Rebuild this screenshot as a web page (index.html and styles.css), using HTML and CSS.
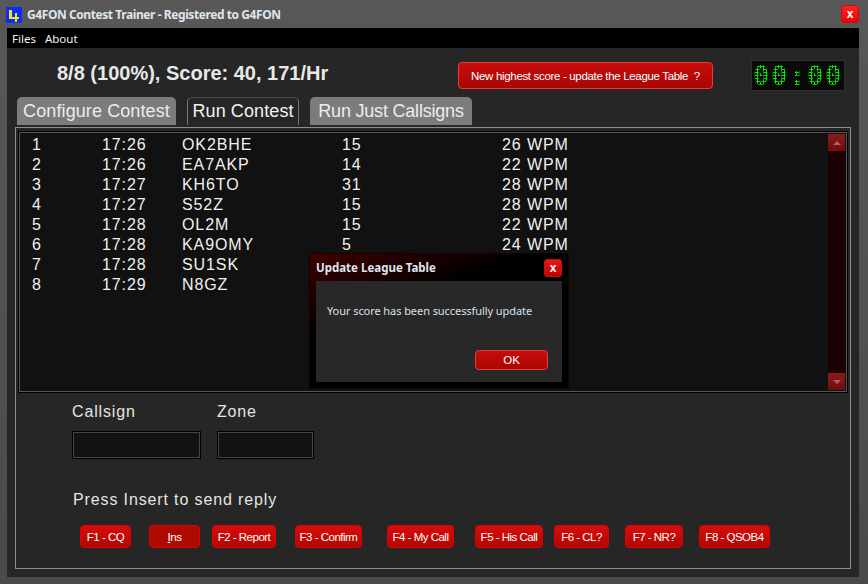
FILE: index.html
```html
<!DOCTYPE html>
<html lang="en">
  <head>
    <meta charset="utf-8" />
    <title>G4FON Contest Trainer</title>
    <link rel="stylesheet" href="styles.css">
  </head>
  <body>
    <div class="window">
      <div class="titlebar">
        <svg class="app-icon" width="16" height="16" viewBox="0 0 16 16">
          <rect width="16" height="16" fill="#0a2cff" />
          <path d="M3 3h3v7h3V6h2v4h2v2h-2v3H9v-3H3z" fill="#f5e614" />
        </svg>
        <span class="title-text">G4FON Contest Trainer - Registered to G4FON</span>
        <button class="close-btn" type="button">x</button>
      </div>

      <div class="client">
        <div class="menubar">
          <span>Files</span>
          <span>About</span>
        </div>

        <div class="content">
          <div class="score-row">
            <div class="score">8/8 (100%), Score: 40, 171/Hr</div>
            <button class="red-btn league-btn" type="button">New highest score - update the League Table&nbsp; ?</button>
            <div class="timer"><span class="timer-digits">00:00</span></div>
          </div>

          <div class="tabs">
            <div class="tab tab-configure">Configure Contest</div>
            <div class="tab tab-active">Run Contest</div>
            <div class="tab tab-calls">Run Just Callsigns</div>
          </div>

          <div class="panel">
            <div class="log">
              <div class="log-rows">
                <div class="log-row"><span>1</span><span>17:26</span><span>OK2BHE</span><span>15</span><span>26 WPM</span></div>
                <div class="log-row"><span>2</span><span>17:26</span><span>EA7AKP</span><span>14</span><span>22 WPM</span></div>
                <div class="log-row"><span>3</span><span>17:27</span><span>KH6TO</span><span>31</span><span>28 WPM</span></div>
                <div class="log-row"><span>4</span><span>17:27</span><span>S52Z</span><span>15</span><span>28 WPM</span></div>
                <div class="log-row"><span>5</span><span>17:28</span><span>OL2M</span><span>15</span><span>22 WPM</span></div>
                <div class="log-row"><span>6</span><span>17:28</span><span>KA9OMY</span><span>5</span><span>24 WPM</span></div>
                <div class="log-row"><span>7</span><span>17:28</span><span>SU1SK</span><span></span><span></span></div>
                <div class="log-row"><span>8</span><span>17:29</span><span>N8GZ</span><span></span><span></span></div>
              </div>
              <div class="scrollbar">
                <div class="scroll-btn"><span class="arrow-up"></span></div>
                <div class="scroll-btn"><span class="arrow-down"></span></div>
              </div>
            </div>

            <div class="entry">
              <div class="field field-call">
                <label for="callsign">Callsign</label>
                <input id="callsign" type="text" />
              </div>
              <div class="field field-zone">
                <label for="zone">Zone</label>
                <input id="zone" type="text" />
              </div>
            </div>

            <div class="hint">Press Insert to send reply</div>

            <div class="fkeys">
              <button class="red-btn fkey k1" type="button">F1 - CQ</button>
              <button class="red-btn fkey k2" type="button"><u>I</u>ns</button>
              <button class="red-btn fkey k3" type="button">F2 - Report</button>
              <button class="red-btn fkey k4" type="button">F3 - Confirm</button>
              <button class="red-btn fkey k5" type="button">F4 - My Call</button>
              <button class="red-btn fkey k6" type="button">F5 - His Call</button>
              <button class="red-btn fkey k7" type="button">F6 - CL?</button>
              <button class="red-btn fkey k8" type="button">F7 - NR?</button>
              <button class="red-btn fkey k9" type="button">F8 - QSOB4</button>
            </div>
          </div>
        </div>
      </div>

      <div class="dialog">
        <div class="dialog-title">
          <span>Update League Table</span>
          <button class="close-btn close-small" type="button">x</button>
        </div>
        <div class="dialog-body">
          <p>Your score has been successfully update</p>
          <button class="red-btn ok-btn" type="button">OK</button>
        </div>
      </div>
    </div>
  </body>
</html>
```

FILE: styles.css
```css
* {
  box-sizing: border-box;
}
html,
body {
  margin: 0;
  height: 100%;
  background: #4e4e4e;
}
body {
  font-family: "Liberation Sans", Arial, sans-serif;
  color: #e6e6e6;
  overflow: hidden;
}
button {
  font-family: inherit;
  margin: 0;
  padding: 0;
  cursor: pointer;
}

.window {
  position: relative;
  width: 868px;
  height: 584px;
  padding: 0 9px 7px 7px;
  background: linear-gradient(#585858, #4a4a4a);
  display: flex;
  flex-direction: column;
}

.titlebar {
  height: 28px;
  display: flex;
  align-items: center;
  flex-shrink: 0;
}
.app-icon {
  margin: 2px 0 0 -1px;
}
.title-text {
  margin-left: 5px;
  font: bold 12px "Noto Sans", sans-serif;
  letter-spacing: -0.42px;
  color: #dfe6ee;
}
.close-btn {
  margin: 0 0 0 auto;
  width: 18px;
  height: 18px;
  border: 1px solid #c01010;
  border-radius: 3px;
  background: linear-gradient(#ff2424, #f00000);
  color: #fff;
  font: bold 12px/14px "Liberation Sans", sans-serif;
}

.client {
  flex: 1;
  display: flex;
  flex-direction: column;
  background: #262626;
}
.menubar {
  height: 20px;
  background: #000;
  display: flex;
  gap: 9px;
  padding-left: 5px;
  align-items: center;
  font: 11.5px "Noto Sans", sans-serif;
  color: #f0f0f0;
  flex-shrink: 0;
}
.content {
  flex: 1;
  display: flex;
  flex-direction: column;
  padding: 0 8px 8px;
}

.score-row {
  height: 49px;
  display: flex;
  align-items: flex-start;
  flex-shrink: 0;
}
.score {
  margin: 14px 0 0 42px;
  width: 401px;
  font-size: 20px;
  font-weight: bold;
  line-height: 22px;
  color: #e8e8e8;
  white-space: nowrap;
}
.red-btn {
  border: 1px solid #e83c3c;
  border-radius: 4px;
  background: linear-gradient(#c80c0c, #a80800);
  color: #fff;
  font-size: 11.5px;
  white-space: nowrap;
}
.league-btn {
  margin-top: 14px;
  width: 255px;
  height: 27px;
  letter-spacing: -0.33px;
  flex-shrink: 0;
}
.timer {
  margin: 12px 0 0 38px;
  width: 94px;
  height: 31px;
  background: #0a0a0a;
  border: 1px solid #303030;
  display: flex;
  align-items: center;
  justify-content: center;
  flex-shrink: 0;
}
.timer-digits {
  font: bold 27px/27px "DejaVu Sans Mono", monospace;
  letter-spacing: 1.7px;
  color: #00e800;
  -webkit-mask-image: radial-gradient(circle at 1.5px 1.5px, #000 1.2px, transparent 1.4px);
  -webkit-mask-size: 3px 3px;
  mask-image: radial-gradient(circle at 1.5px 1.5px, #000 1.2px, transparent 1.4px);
  mask-size: 3px 3px;
}

.tabs {
  height: 30px;
  display: flex;
  align-items: flex-start;
  padding-left: 2px;
  flex-shrink: 0;
}
.tab {
  height: 28px;
  display: flex;
  align-items: center;
  justify-content: center;
  font-size: 18px;
  letter-spacing: 0.1px;
  border-radius: 5px 5px 0 0;
  background: #7c7c7c;
  color: #ececec;
}
.tab-configure {
  width: 159px;
}
.tab-active {
  margin-left: 11px;
  width: 112px;
  background: #262626;
  border: 1px solid #777;
  border-top-color: #484848;
  border-bottom: 0;
  color: #f2f2f2;
}
.tab-calls {
  margin-left: 11px;
  width: 162px;
  letter-spacing: -0.2px;
}

.panel {
  flex: 1;
  border: 1px solid #8c8c8c;
  padding: 4px 3px 0;
  display: flex;
  flex-direction: column;
}
.log {
  height: 260px;
  display: flex;
  background: #111;
  border: 1px solid #555;
  outline: 1px solid #000;
  flex-shrink: 0;
}
.log-rows {
  flex: 1;
  padding: 2px 0 0 12px;
}
.log-row {
  display: grid;
  grid-template-columns: 70px 80px 160px 160px 1fr;
  height: 20px;
  font-size: 16px;
  line-height: 20px;
  letter-spacing: 0.9px;
  color: #f0f0f0;
}
.scrollbar {
  width: 17px;
  margin: 1px 1px 1px 0;
  background: #1a0000;
  display: flex;
  flex-direction: column;
  justify-content: space-between;
}
.scroll-btn {
  height: 17px;
  background: linear-gradient(#8a1a1a, #6e0e0e);
  display: flex;
  align-items: center;
  justify-content: center;
}
.arrow-up,
.arrow-down {
  width: 0;
  height: 0;
  border-left: 4px solid transparent;
  border-right: 4px solid transparent;
}
.arrow-up {
  border-bottom: 4px solid #b06060;
}
.arrow-down {
  border-top: 4px solid #b06060;
}

.entry {
  display: flex;
  margin-top: 10px;
  padding-left: 53px;
}
.field {
  display: flex;
  flex-direction: column;
}
.field label {
  font-size: 16px;
  line-height: 20px;
  letter-spacing: 0.85px;
  color: #e4e4e4;
}
.field input {
  margin-top: 9px;
  height: 28px;
  background: #121212;
  border: 1px solid #000;
  box-shadow: inset 0 0 0 1px #444;
}
.field-call {
  width: 145px;
}
.field-call input {
  width: 129px;
}
.field-zone input {
  width: 97px;
}

.hint {
  margin: 31px 0 0 54px;
  font-size: 16px;
  line-height: 20px;
  letter-spacing: 0.87px;
  color: #e4e4e4;
}

.fkeys {
  display: flex;
  margin: 15px 0 0 61px;
}
.fkey {
  height: 23px;
  border: 1px solid #e00000;
  border-radius: 4px;
  background: linear-gradient(#d80c0c, #b00800);
  letter-spacing: -0.5px;
  flex-shrink: 0;
}
.k1 { width: 51px; }
.k2 { width: 51px; margin-left: 18px; background: #ae0a00; }
.k3 { width: 64px; margin-left: 12px; }
.k4 { width: 67px; margin-left: 19px; }
.k5 { width: 67px; margin-left: 25px; }
.k6 { width: 68px; margin-left: 21px; }
.k7 { width: 55px; margin-left: 11px; }
.k8 { width: 58px; margin-left: 16px; }
.k9 { width: 71px; margin-left: 16px; }

.dialog {
  position: absolute;
  left: 309px;
  top: 253px;
  width: 260px;
  height: 136px;
  padding: 0 6px 6px;
  background: linear-gradient(160deg, #400000, #000 35%);
  border: 1px solid #160000;
  display: flex;
  flex-direction: column;
}
.dialog-title {
  height: 27px;
  display: flex;
  align-items: center;
  font: bold 11.5px "Noto Sans", sans-serif;
  color: #dfe6ee;
  flex-shrink: 0;
}
.close-small {
  background: linear-gradient(#e81818, #c00000);
}
.dialog-body {
  flex: 1;
  background: #282828;
  padding: 0 14px 0 11px;
  display: flex;
  flex-direction: column;
}
.dialog-body p {
  margin: 21px 0 0;
  font: 11px/18px "Noto Sans", sans-serif;
  letter-spacing: -0.07px;
  color: #d8e0e8;
}
.ok-btn {
  align-self: flex-end;
  margin-top: 30px;
  width: 73px;
  height: 20px;
}
```
